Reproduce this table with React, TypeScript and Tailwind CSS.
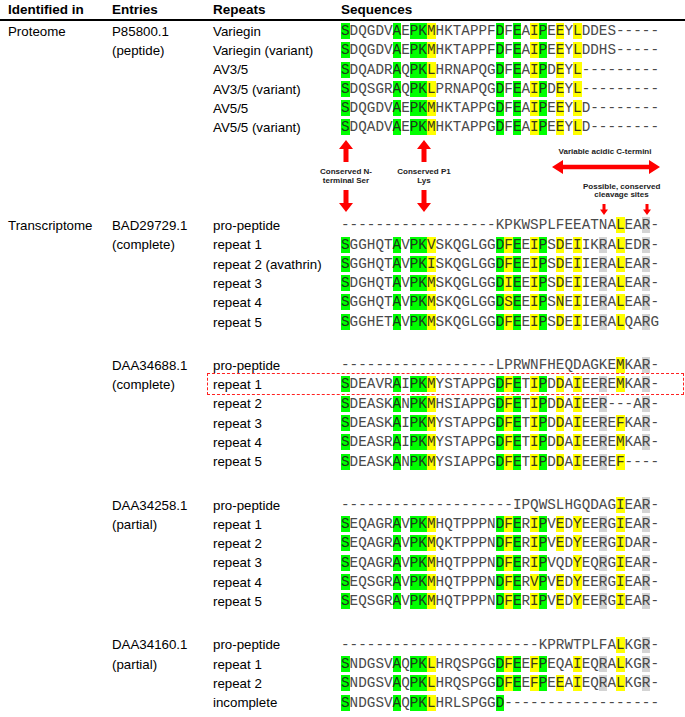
type Row = {
  label?: string;
  entry?: string;
  rep: string;
  seq: string;
  g?: number[];
  y?: number[];
  r?: number[];
  boxed?: boolean;
};

const G = [0, 6, 8, 9, 18, 20, 23];
const PRO = { y: [32], r: [35] };
const FULL = { g: G, y: [10, 19, 22, 25, 27, 32], r: [30, 35] };

const proteome: Row[] = [
  { label: "Proteome", entry: "P85800.1", rep: "Variegin", seq: "SDQGDVAEPKMHKTAPPFDFEAIPEEYLDDES-----", g: G, y: [10, 22, 25, 27] },
  { entry: "(peptide)", rep: "Variegin (variant)", seq: "SDQGDVAEPKMHKTAPPFDFEAIPEEYLDDHS-----", g: G, y: [10, 22, 25, 27] },
  { rep: "AV3/5", seq: "SDQADRAQPKLHRNAPQGDFEAIPDEYL---------", g: G, y: [10, 22, 25, 27] },
  { rep: "AV3/5 (variant)", seq: "SDQSGRAQPKLPRNAPQGDFEAIPDEYL---------", g: G, y: [10, 22, 25, 27] },
  { rep: "AV5/5", seq: "SDQGDVAEPKMHKTAPPGDFEAIPEEYLD--------", g: G, y: [10, 22, 25, 27] },
  { rep: "AV5/5 (variant)", seq: "SDQADVAEPKMHKTAPPGDFEAIPEEYLD--------", g: G, y: [10, 22, 25, 27] },
];

const groups: Row[][] = [
  [
    { label: "Transcriptome", entry: "BAD29729.1", rep: "pro-peptide", seq: "------------------KPKWSPLFEEATNALEAR-", ...PRO },
    { entry: "(complete)", rep: "repeat 1", seq: "SGGHQTAVPKVSKQGLGGDFEEIPSDEIIKRALEDR-", ...FULL },
    { rep: "repeat 2 (avathrin)", seq: "SGGHQTAVPKISKQGLGGDFEEIPSDEIIERALEAR-", ...FULL },
    { rep: "repeat 3", seq: "SDGHQTAVPKMSKQGLGGDIEEIPSDEIIERALEAR-", ...FULL },
    { rep: "repeat 4", seq: "SGGHQTAVPKMSKQGLGGDSEEIPSNEIIERALEAR-", ...FULL },
    { rep: "repeat 5", seq: "SGGHETAVPKMSKQGLGGDFEEIPSDEIIERALQARG", ...FULL },
  ],
  [
    { entry: "DAA34688.1", rep: "pro-peptide", seq: "------------------LPRWNFHEQDAGKEMKAR-", ...PRO },
    { entry: "(complete)", rep: "repeat 1", seq: "SDEAVRAIPKMYSTAPPGDFETIPDDAIEEREMKAR-", ...FULL, boxed: true },
    { rep: "repeat 2", seq: "SDEASKANPKMHSIAPPGDFETIPDDAIEER---AR-", g: G, y: [10, 19, 22, 25, 27], r: [30, 35] },
    { rep: "repeat 3", seq: "SDEASKAIPKMYSTAPPGDFETIPDDAIEEREFKAR-", ...FULL },
    { rep: "repeat 4", seq: "SDEASRAIPKMYSTAPPGDFETIPDDAIEEREMKAR-", ...FULL },
    { rep: "repeat 5", seq: "SDEASKANPKMYSIAPPGDFETIPDDAIEEREF----", g: G, y: [10, 19, 22, 25, 27, 32], r: [30] },
  ],
  [
    { entry: "DAA34258.1", rep: "pro-peptide", seq: "--------------------IPQWSLHGQDAGIEAR-", ...PRO },
    { entry: "(partial)", rep: "repeat 1", seq: "SEQAGRAVPKMHQTPPPNDFERIPVEDYEERGIEAR-", ...FULL },
    { rep: "repeat 2", seq: "SEQAGRAVPKMQKTPPPNDFERIPVEDYEERGIDAR-", ...FULL },
    { rep: "repeat 3", seq: "SEQAGRAVPKMHQTPPPNDFERIPVQDYEQRGIEAR-", g: G, y: [10, 19, 22, 27, 32], r: [30, 35] },
    { rep: "repeat 4", seq: "SEQSGRAVPKMHQTPPPNDFERVPVEDYEERGIEAR-", ...FULL },
    { rep: "repeat 5", seq: "SEQSGRAVPKMHQTPPPNDFERIPVEDYEERGIEAR-", ...FULL },
  ],
  [
    { entry: "DAA34160.1", rep: "pro-peptide", seq: "-----------------------KPRWTPLFALKGR-", ...PRO },
    { entry: "(partial)", rep: "repeat 1", seq: "SNDGSVAQPKLHRQSPGGDFEEFPEQAIEQRALKGR-", g: G, y: [10, 19, 22, 27, 32], r: [30, 35] },
    { rep: "repeat 2", seq: "SNDGSVAQPKLHRQSPGGDFEEFPEEAIEQRALKGR-", ...FULL },
    { rep: "incomplete", seq: "SNDGSVAQPKLHRLSPGGD------------------", g: [0, 6, 8, 9, 18], y: [10] },
  ],
];

const Seq = ({ row }: { row: Row }) => (
  <span className="whitespace-pre font-['Liberation_Mono',monospace] text-[14.3px] text-[#4a4a4a]">
    {row.seq.split("").map((c, i) => {
      let bg = "";
      if (row.g?.includes(i)) bg = "bg-[#00ff00] text-[#1a3a1a]";
      else if (row.y?.includes(i)) bg = "bg-[#ffff00] text-[#3a3a1a]";
      else if (row.r?.includes(i)) bg = "bg-[#d4d4d4]";
      return (
        <span key={i} className={bg}>
          {c}
        </span>
      );
    })}
  </span>
);

const SeqRow = ({ row }: { row: Row }) => (
  <div className="relative grid h-[19.3px] grid-cols-[104px_101px_128px_1fr] items-center pl-2 text-[13.3px] text-black">
    <div>{row.label}</div>
    <div>{row.entry}</div>
    <div className="whitespace-nowrap">{row.rep}</div>
    <div className="flex items-center">
      <Seq row={row} />
    </div>
    {row.boxed && (
      <div className="absolute left-[207px] right-[1px] top-[-1px] bottom-[-1px] border-[1.5px] border-dashed border-[#ff2020]" />
    )}
  </div>
);

const VArrow = ({ down }: { down?: boolean }) => (
  <svg width="14" height="22" viewBox="0 0 14 22" className="shrink-0">
    <polygon
      fill="#ff0000"
      points="7,0 14,9 9.5,9 9.5,22 4.5,22 4.5,9 0,9"
      transform={down ? "rotate(180 7 11)" : undefined}
    />
  </svg>
);

const SmallArrow = () => (
  <svg width="8" height="11" viewBox="0 0 8 11" className="shrink-0">
    <polygon fill="#ff0000" points="4,11 8,5.5 5.5,5.5 5.5,0 2.5,0 2.5,5.5 0,5.5" />
  </svg>
);

const Note = ({ lines }: { lines: string[] }) => (
  <div className="whitespace-nowrap text-center text-[8px] font-bold leading-[8.8px] text-[#222]">
    {lines.map((l) => (
      <div key={l}>{l}</div>
    ))}
  </div>
);

const Annotations = () => (
  <div className="flex h-[78.5px] pl-[306px]">
    {/* conserved N-terminal Ser */}
    <div className="flex w-[80px] flex-col items-center pt-[3px]">
      <VArrow />
      <div className="mt-[6px] h-[22px]">
        <Note lines={["Conserved N-", "terminal Ser"]} />
      </div>
      <VArrow down />
    </div>
    {/* conserved P1 Lys */}
    <div className="flex w-[76px] flex-col items-center pt-[3px]">
      <VArrow />
      <div className="mt-[6px] h-[22px]">
        <Note lines={["Conserved P1", "Lys"]} />
      </div>
      <VArrow down />
    </div>
    {/* C-termini and cleavage sites */}
    <div className="ml-[88px] flex w-[110px] flex-col pt-[11px]">
      <div className="flex justify-center">
        <Note lines={["Variable acidic C-termini"]} />
      </div>
      <svg width="108" height="14" viewBox="0 0 108 14" className="ml-[2px] mt-[3px]">
        <polygon fill="#ff0000" points="0,7 11,0 11,4.8 97,4.8 97,0 108,7 97,14 97,9.2 11,9.2 11,14" />
      </svg>
      <div className="ml-[33px] mt-[9px]">
        <Note lines={["Possible, conserved", "cleavage sites"]} />
      </div>
      <div className="mt-[4px] flex gap-[35px] pl-[50px]">
        <SmallArrow />
        <SmallArrow />
      </div>
    </div>
  </div>
);

export default function App() {
  return (
    <div className="h-[717px] w-[685px] overflow-hidden bg-white font-['Liberation_Sans',Arial,sans-serif]">
      <div className="grid h-[21px] grid-cols-[104px_101px_128px_1fr] items-center border-b-2 border-black pl-2 text-[13.5px] font-bold text-black">
        <div>Identified in</div>
        <div>Entries</div>
        <div>Repeats</div>
        <div>Sequences</div>
      </div>
      {proteome.map((r, i) => (
        <SeqRow key={i} row={r} />
      ))}
      <Annotations />
      <div className="flex flex-col gap-[24px]">
        {groups.map((g, gi) => (
          <div key={gi}>
            {g.map((r, i) => (
              <SeqRow key={i} row={r} />
            ))}
          </div>
        ))}
      </div>
    </div>
  );
}
